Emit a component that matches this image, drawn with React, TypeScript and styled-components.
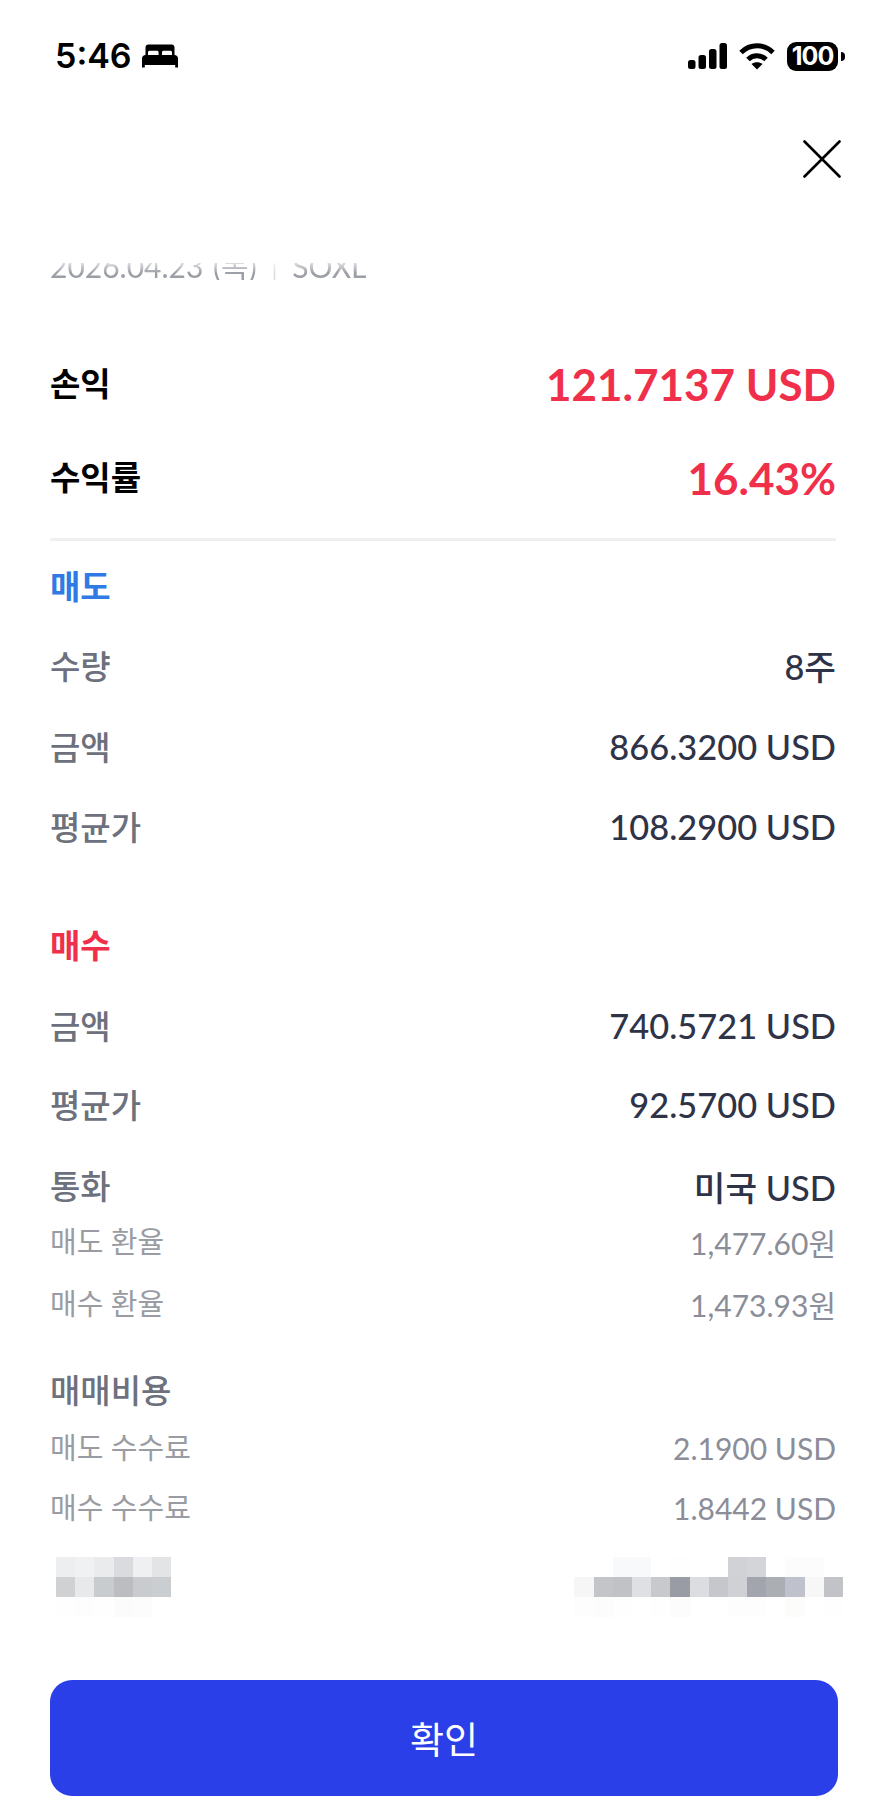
import React from 'react'
import styled, { createGlobalStyle } from 'styled-components'

const GlobalStyle = createGlobalStyle`
  html, body {
    margin: 0;
    padding: 0;
    background: #ffffff;
  }
  * {
    box-sizing: border-box;
  }
`

const FONT = `Lato, "Noto Sans CJK KR", sans-serif`

const Screen = styled.div`
  width: 886px;
  height: 1800px;
  overflow: hidden;
  background: #ffffff;
  font-family: ${FONT};
  display: flex;
  flex-direction: column;
`

const StatusBar = styled.div`
  height: 100px;
  padding: 41px 48px 0 55px;
  display: flex;
  justify-content: space-between;
  align-items: flex-start;
`

const StatusGroup = styled.div<{ $gap: number }>`
  display: flex;
  align-items: center;
  gap: ${p => p.$gap}px;
  height: 30px;
`

const Time = styled.span`
  font-family: Inter, sans-serif;
  font-size: 34px;
  font-weight: 600;
  line-height: 30px;
  color: #000000;
`

const Battery = styled.div`
  width: 51px;
  height: 29px;
  border-radius: 9px;
  background: #000000;
  color: #ffffff;
  font-family: Inter, sans-serif;
  font-size: 25px;
  font-weight: 700;
  letter-spacing: -1px;
  display: flex;
  align-items: center;
  justify-content: center;
  position: relative;

  &::after {
    content: '';
    position: absolute;
    right: -7px;
    top: 10px;
    width: 4px;
    height: 9px;
    border-radius: 0 4px 4px 0;
    background: #000000;
  }
`

const CloseBar = styled.div`
  height: 163px;
  padding: 40px 45px 0 0;
  display: flex;
  justify-content: flex-end;
  align-items: flex-start;
`

const DateClip = styled.div`
  height: 17px;
  padding-left: 50px;
  overflow: hidden;
  display: flex;
  align-items: flex-end;
  mask-image: linear-gradient(to bottom, rgba(0, 0, 0, 0.35), #000000 60%);
`

const DateText = styled.span`
  font-size: 30px;
  line-height: 40px;
  margin-bottom: -10px;
  color: #9c9ea6;
  white-space: nowrap;
  word-spacing: 2px;
`

const DateBar = styled.span`
  margin: 0 15px;
  color: #dcdde0;
  font-size: 22px;
`

const Body = styled.div`
  padding: 0 50px;
  display: flex;
  flex-direction: column;
`

const Summary = styled.div`
  margin-top: 57px;
`

const Row = styled.div<{ $h: number }>`
  height: ${p => p.$h}px;
  display: flex;
  justify-content: space-between;
  align-items: center;
  white-space: nowrap;
`

const HeadLabel = styled.span`
  font-size: 33px;
  font-weight: 700;
  color: #000000;
  margin-top: -4px;
`

const HeadValue = styled.span`
  font-size: 44px;
  font-weight: 700;
  color: #f0304a;
`

const Divider = styled.div`
  height: 3px;
  margin-top: 13px;
  background: #eff0f1;
`

const SectionTitle = styled.span<{ $color: string }>`
  font-size: 33px;
  font-weight: 700;
  color: ${p => p.$color};
  margin-top: -4px;
`

const Group = styled.div<{ $mt: number }>`
  margin-top: ${p => p.$mt}px;
`

const Label = styled.span`
  font-size: 33px;
  font-weight: 500;
  color: #6d707d;
  margin-top: -4px;
`

const Value = styled.span`
  font-size: 34.4px;
  font-weight: 500;
  color: #2f3348;
  margin-top: -3px;
`

const SubLabel = styled.span`
  font-size: 29px;
  color: #9a9ca4;
  margin-top: -4px;
`

const SubValue = styled.span`
  font-size: 30px;
  color: #8b8d99;
  margin-top: -1px;
`

const Mosaic = styled.div`
  margin-top: 9px;
  height: 60px;
  display: flex;
  justify-content: space-between;
`

const MosaicGrid = styled.div<{ $cols: number; $ml: number; $mr: number }>`
  display: grid;
  grid-template-columns: repeat(${p => p.$cols}, 19.2px);
  grid-auto-rows: 20px;
  margin-left: ${p => p.$ml}px;
  margin-right: ${p => p.$mr}px;
`

const Pixel = styled.div<{ $c: string }>`
  background: ${p => p.$c};
`

const ConfirmButton = styled.button`
  margin-top: 63px;
  height: 116px;
  width: 788px;
  border: none;
  border-radius: 22px;
  background: #2a3fe8;
  color: #ffffff;
  font-family: ${FONT};
  font-size: 37px;
  font-weight: 400;
`

const MOSAIC_LEFT = [
  '#eceeef', '#f0f1f2', '#e9ebec', '#d9dbde', '#eef0f1', '#e2e4e5',
  '#cfd1d3', '#e8e9eb', '#c9ccce', '#bcbdc1', '#c9cbce', '#cbced1',
  '#fefefe', '#fdfdfd', '#fefefe', '#fbfbfb', '#fcfcfc', '#ffffff',
]

const MOSAIC_RIGHT = [
  '#ffffff', '#ffffff', '#f8f9fa', '#f8f9fa', '#ffffff', '#fefefe', '#ffffff',
  '#ffffff', '#d0d2d5', '#d3d5d8', '#ffffff', '#fcfcfc', '#fcfcfc', '#ffffff',
  '#f6f6f6', '#c4c5c9', '#c0c2c6', '#dfe0e3', '#c8c9cc', '#9a9ca5', '#dcdde1',
  '#c6c7cc', '#d0d1d5', '#a3a5ae', '#abaeb3', '#bfc1cc', '#f7f7f8', '#c2c3c6',
  '#fdfdfd', '#fcfcfc', '#fefefe', '#ffffff', '#fefefe', '#fcfcfc', '#ffffff',
  '#ffffff', '#fdfdfd', '#fdfdfd', '#ffffff', '#fcfcfa', '#ffffff', '#fefefe',
]

const BedIcon = () => (
  <svg width="36" height="24" viewBox="0 0 36 24" fill="#000">
    <path d="M3.500 11V3.500C3.500 1.500 4.700.5 6.500.5h23c1.800 0 3 1 3 3V11h-2.500V8.500c0-1.200-.6-1.800-1.800-1.800h-6.400c-1.200 0-1.800.6-1.800 1.800V11h-3.400V8.500c0-1.200-.6-1.800-1.800-1.800H7.800C6.600 6.700 6 7.300 6 8.500V11z" />
    <path d="M3.500 11h29c2 0 3.500 1.500 3.500 3.500v9h-2.800V21H2.800v2.500H0v-9C0 12.500 1.500 11 3.500 11z" />
  </svg>
)

const SignalIcon = () => (
  <svg width="39" height="26" viewBox="0 0 39 26" fill="#000">
    <rect x="0" y="17" width="7.500" height="9" rx="2.500" />
    <rect x="10.500" y="12" width="7.500" height="14" rx="2.500" />
    <rect x="21" y="6" width="7.500" height="20" rx="2.500" />
    <rect x="31.500" y="0" width="7.500" height="26" rx="2.500" />
  </svg>
)

const WifiIcon = () => (
  <svg width="38" height="28" viewBox="0 0 38 28" fill="none" stroke="#000" strokeWidth="5">
    <path d="M3 10.500C12 1.500 26 1.500 35 10.500" />
    <path d="M10 17.500C15 12.500 23 12.500 28 17.500" />
    <path d="M19 27.500L13.500 22C16.500 19.500 21.500 19.500 24.500 22Z" fill="#000" stroke="none" />
  </svg>
)

const CloseIcon = () => (
  <svg width="38" height="38" viewBox="0 0 38 38" fill="none" stroke="#000" strokeWidth="2.600" strokeLinecap="round">
    <path d="M1.500 1.500L36.500 36.500" />
    <path d="M36.500 1.500L1.500 36.500" />
  </svg>
)

export default function App() {
  return (
    <Screen>
      <GlobalStyle />
      <StatusBar>
        <StatusGroup $gap={10}>
          <Time>5:46</Time>
          <BedIcon />
        </StatusGroup>
        <StatusGroup $gap={11}>
          <SignalIcon />
          <WifiIcon />
          <Battery>100</Battery>
        </StatusGroup>
      </StatusBar>
      <CloseBar>
        <CloseIcon />
      </CloseBar>
      <DateClip>
        <DateText>
          2026.04.23 (목)
          <DateBar>|</DateBar>
          SOXL
        </DateText>
      </DateClip>
      <Body>
        <Summary>
          <Row $h={94}>
            <HeadLabel>손익</HeadLabel>
            <HeadValue>121.7137 USD</HeadValue>
          </Row>
          <Row $h={94}>
            <HeadLabel>수익률</HeadLabel>
            <HeadValue>16.43%</HeadValue>
          </Row>
          <Divider />
        </Summary>
        <Group $mt={6}>
          <Row $h={80}>
            <SectionTitle $color="#2f7ae5">매도</SectionTitle>
          </Row>
          <Row $h={79}>
            <Label>수량</Label>
            <Value>8주</Value>
          </Row>
          <Row $h={84}>
            <Label>금액</Label>
            <Value>866.3200 USD</Value>
          </Row>
          <Row $h={76}>
            <Label>평균가</Label>
            <Value>108.2900 USD</Value>
          </Row>
        </Group>
        <Group $mt={40}>
          <Row $h={80}>
            <SectionTitle $color="#f0304a">매수</SectionTitle>
          </Row>
          <Row $h={82}>
            <Label>금액</Label>
            <Value>740.5721 USD</Value>
          </Row>
          <Row $h={76}>
            <Label>평균가</Label>
            <Value>92.5700 USD</Value>
          </Row>
          <Row $h={86}>
            <Label>통화</Label>
            <Value>미국 USD</Value>
          </Row>
          <Row $h={24}>
            <SubLabel>매도 환율</SubLabel>
            <SubValue>1,477.60원</SubValue>
          </Row>
          <Row $h={100}>
            <SubLabel>매수 환율</SubLabel>
            <SubValue>1,473.93원</SubValue>
          </Row>
          <Row $h={74}>
            <Label>매매비용</Label>
          </Row>
          <Row $h={40}>
            <SubLabel>매도 수수료</SubLabel>
            <SubValue>2.1900 USD</SubValue>
          </Row>
          <Row $h={80}>
            <SubLabel>매수 수수료</SubLabel>
            <SubValue>1.8442 USD</SubValue>
          </Row>
        </Group>
        <Mosaic>
          <MosaicGrid $cols={6} $ml={6} $mr={0}>
            {MOSAIC_LEFT.map((c, i) => (
              <Pixel key={i} $c={c} />
            ))}
          </MosaicGrid>
          <MosaicGrid $cols={14} $ml={0} $mr={-7}>
            {MOSAIC_RIGHT.map((c, i) => (
              <Pixel key={i} $c={c} />
            ))}
          </MosaicGrid>
        </Mosaic>
        <ConfirmButton>확인</ConfirmButton>
      </Body>
    </Screen>
  )
}
